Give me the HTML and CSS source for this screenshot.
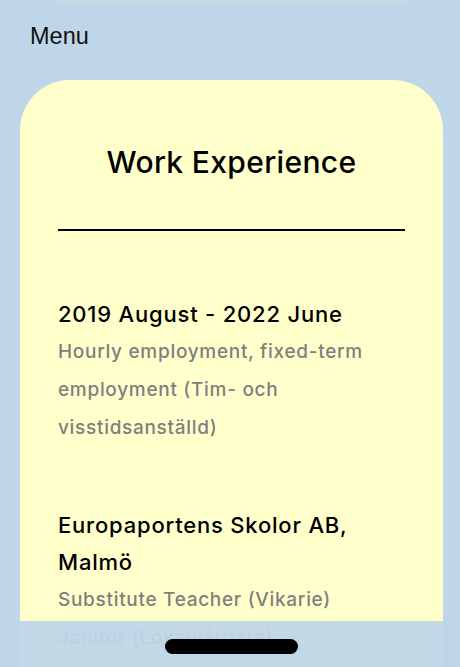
FILE: index.html
```html
<!DOCTYPE html>
<html lang="en">
<head>
<meta charset="utf-8">
<title>Work Experience</title>
<link rel="stylesheet" href="styles.css">
</head>
<body>
<div class="top-peek"></div>
<nav class="menu">Menu</nav>
<main class="card">
  <h1 class="title">Work Experience</h1>
  <hr class="rule">
  <section class="entry">
    <h2 class="entry-head">2019 August - 2022 June</h2>
    <p class="entry-text">Hourly employment, fixed-term employment (Tim- och visstidsanställd)</p>
  </section>
  <section class="entry">
    <h2 class="entry-head">Europaportens Skolor AB, Malmö</h2>
    <p class="entry-text">Substitute Teacher (Vikarie)</p>
    <p class="entry-text">Janitor (Lokalvårdare)</p>
  </section>
</main>
<div class="bottom-bar"><span class="home-pill"></span></div>
</body>
</html>
```
FILE: styles.css
```css
html, body {
  margin: 0;
  padding: 0;
}
body {
  background: #bfd6e9;
  font-family: Inter, "Noto Sans", sans-serif;
  height: 667px;
  overflow: hidden;
}
.top-peek {
  height: 5px;
  margin: 0 52px 0 55px;
  background: #c4dae5;
  border-radius: 0 0 40px 40px;
}
.menu {
  font-family: "Liberation Sans", Arial, sans-serif;
  font-size: 23.5px;
  color: #111;
  padding: 18px 0 0 30px;
  height: 57px;
  line-height: 27px;
}
.card {
  margin-left: 20px;
  width: 423px;
  box-sizing: border-box;
  background: #ffffcc;
  border-radius: 50px 50px 0 0;
  padding: 64px 38px 40px;
  min-height: 700px;
}
.title {
  margin: 0;
  text-align: center;
  font-size: 30px;
  letter-spacing: 0.35px;
  font-weight: 500;
  line-height: 36px;
  color: #000;
}
.rule {
  margin: 49px 0 0;
  border: 0;
  border-top: 2px solid #000;
}
.entry {
  margin-top: 65px;
}
.entry + .entry {
  margin-top: 60px;
}
.entry-head {
  margin: 0;
  font-size: 22px;
  letter-spacing: 0.8px;
  font-weight: 500;
  line-height: 37px;
  color: #000;
}
.entry-text {
  margin: 0;
  font-size: 19px;
  letter-spacing: 0.7px;
  font-weight: 500;
  line-height: 38px;
  color: #7f7f7f;
}
.bottom-bar {
  position: fixed;
  left: 0;
  right: 0;
  bottom: 0;
  height: 46px;
  background: rgba(191, 214, 233, 0.94);
  display: flex;
  justify-content: center;
  padding-top: 18px;
  box-sizing: border-box;
}
.home-pill {
  display: block;
  width: 133px;
  height: 15px;
  border-radius: 8px;
  background: #000;
  margin-left: 2px;
}
```
